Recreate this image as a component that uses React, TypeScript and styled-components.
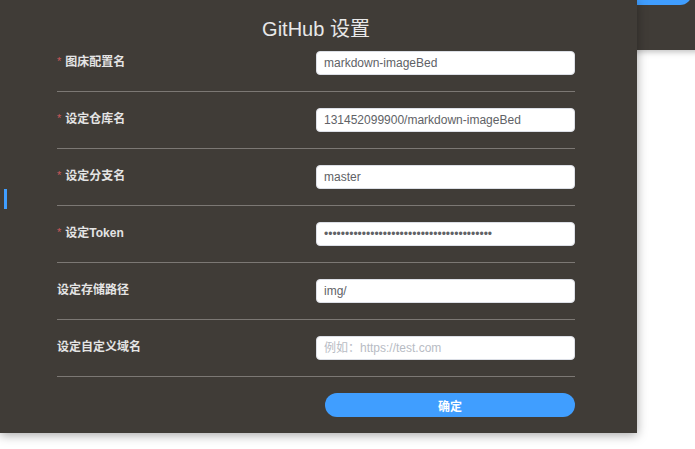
import React from "react";
import styled, { createGlobalStyle } from "styled-components";

const Global = createGlobalStyle`
  html, body { margin: 0; padding: 0; background: #ffffff; }
  body { font-family: "Liberation Sans", "Noto Sans CJK SC", Arial, sans-serif; }
  #root { width: 695px; height: 449px; position: relative; overflow: hidden; }
`;

const Stage = styled.div`
  position: relative;
  width: 695px;
  height: 449px;
  overflow: hidden;
`;

const BackWindow = styled.div`
  position: absolute;
  left: 560px;
  top: 0;
  width: 160px;
  height: 50px;
  background: #403c37;
  box-shadow: 0 2px 6px rgba(0, 0, 0, 0.25);
`;

const BackButton = styled.div`
  position: absolute;
  left: 40px;
  top: -19px;
  width: 92px;
  height: 24px;
  border-radius: 12px;
  background: #409eff;
  color: #fff;
  font-size: 12px;
  font-weight: 700;
  line-height: 24px;
  padding-left: 47px;
  box-sizing: border-box;
  font-family: "Noto Sans CJK SC", sans-serif;
`;

const Panel = styled.div`
  position: relative;
  width: 637px;
  height: 433px;
  background: #403c37;
  box-shadow: 0 2px 10px rgba(0, 0, 0, 0.35);
  box-sizing: border-box;
  padding: 0 62px 0 57px;
  display: flex;
  flex-direction: column;
`;

const Indicator = styled.div`
  position: absolute;
  left: 4px;
  top: 189px;
  width: 3px;
  height: 20px;
  background: #409eff;
`;

const Title = styled.h1`
  margin: 0 0 10px;
  padding-top: 17px;
  font-size: 20px;
  line-height: 24px;
  font-weight: 400;
  color: #e8e8e8;
  text-align: center;
  font-family: "Liberation Sans", "Noto Sans CJK SC", sans-serif;
`;

const Row = styled.div`
  display: flex;
  align-items: center;
  justify-content: space-between;
  height: 24px;
  padding-bottom: 16px;
  margin-bottom: 16px;
  border-bottom: 1px solid #7c7874;
`;

const Label = styled.label`
  display: flex;
  align-items: center;
  margin-bottom: 2px;
  font-size: 12px;
  line-height: 16px;
  font-weight: 700;
  color: #e4e4e4;
  font-family: "Liberation Sans", "Noto Sans CJK SC", sans-serif;
`;

const Star = styled.span`
  color: #c9585a;
  font-size: 11px;
  margin-right: 4px;
  font-weight: 400;
  position: relative;
  top: -1px;
`;

const Input = styled.input`
  width: 259px;
  height: 24px;
  box-sizing: border-box;
  border: 1px solid #dcdfe6;
  border-radius: 4px;
  background: #ffffff;
  padding: 0 7px;
  font-size: 12px;
  color: #606266;
  font-family: "Liberation Sans", "Noto Sans CJK SC", Arial, sans-serif;
  outline: none;
  &::placeholder { color: #b8bcc4; }
`;

const Footer = styled.div`
  display: flex;
  justify-content: flex-end;
`;

const Submit = styled.button`
  width: 250px;
  height: 24px;
  border: none;
  border-radius: 12px;
  background: #409eff;
  color: #ffffff;
  font-size: 12px;
  font-weight: 700;
  font-family: "Noto Sans CJK SC", sans-serif;
  padding: 0;
  cursor: pointer;
`;

type Field = {
  label: string;
  required: boolean;
  value?: string;
  placeholder?: string;
};

const fields: Field[] = [
  { label: "图床配置名", required: true, value: "markdown-imageBed" },
  { label: "设定仓库名", required: true, value: "131452099900/markdown-imageBed" },
  { label: "设定分支名", required: true, value: "master" },
  { label: "设定Token", required: true, value: "••••••••••••••••••••••••••••••••••••••••" },
  { label: "设定存储路径", required: false, value: "img/" },
  { label: "设定自定义域名", required: false, placeholder: "例如：https://test.com" },
];

export default function App() {
  return (
    <Stage>
      <Global />
      <BackWindow>
        <BackButton>确定</BackButton>
      </BackWindow>
      <Panel>
        <Indicator />
        <Title>GitHub 设置</Title>
        {fields.map((f) => (
          <Row key={f.label}>
            <Label>
              {f.required && <Star>*</Star>}
              {f.label}
            </Label>
            <Input defaultValue={f.value} placeholder={f.placeholder} readOnly />
          </Row>
        ))}
        <Footer>
          <Submit>确定</Submit>
        </Footer>
      </Panel>
    </Stage>
  );
}
